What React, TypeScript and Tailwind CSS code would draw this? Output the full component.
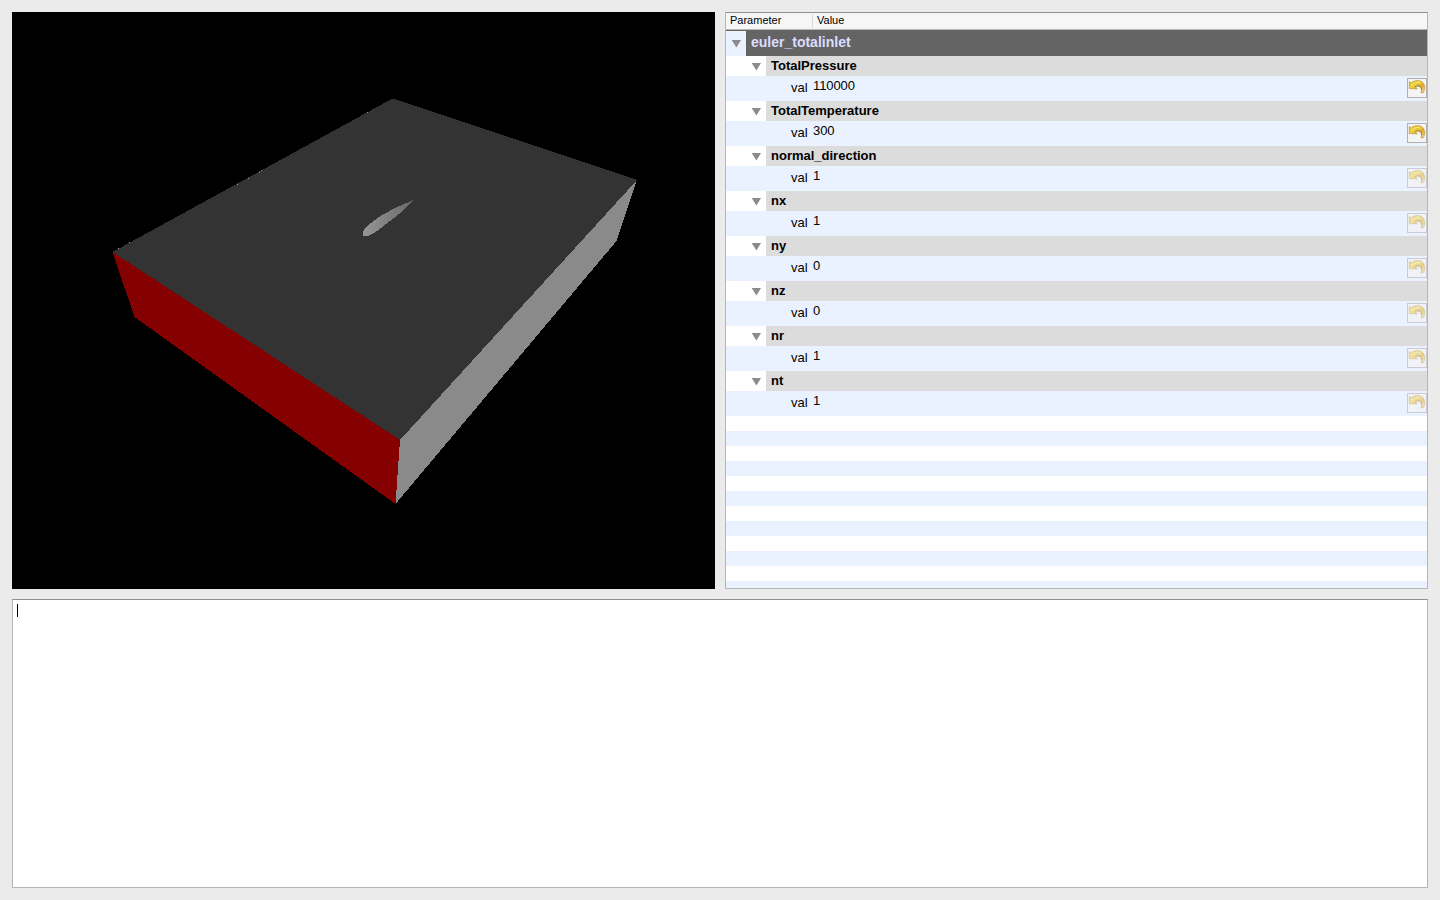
const groups = [
  { name: 'TotalPressure', value: '110000', changed: true },
  { name: 'TotalTemperature', value: '300', changed: true },
  { name: 'normal_direction', value: '1', changed: false },
  { name: 'nx', value: '1', changed: false },
  { name: 'ny', value: '0', changed: false },
  { name: 'nz', value: '0', changed: false },
  { name: 'nr', value: '1', changed: false },
  { name: 'nt', value: '1', changed: false },
];

function Arrow() {
  return (
    <svg width="10" height="8" viewBox="0 0 10 8" className="shrink-0">
      <path d="M0.7 0H10L5.4 7.5Z" fill="#8b8b8b" />
    </svg>
  );
}

function ResetButton({ enabled }: { enabled: boolean }) {
  return (
    <button
      className={
        enabled
          ? 'h-5 w-5 shrink-0 border border-[#b0b0b0] bg-[#f4f4f4]'
          : 'h-5 w-5 shrink-0 border border-[#cbccd2] bg-[#f0f2f8]'
      }
    >
      <svg width="18" height="18" viewBox="0 0 18 18" className={enabled ? 'block' : 'block opacity-50'}>
        <defs>
          <linearGradient id="undo" x1="0" y1="0" x2="1" y2="1">
            <stop offset="0" stopColor="#dcb318" />
            <stop offset="0.3" stopColor="#efd347" />
            <stop offset="0.6" stopColor="#d9aa28" />
            <stop offset="1" stopColor="#edd5b0" />
          </linearGradient>
        </defs>
        <path
          d="M1.3 2.6L3.4 4C6.3 1 11.6 0.8 14.6 3.4C17.3 6 17.3 10.8 15 14L13 13.7C14 11.2 13.6 8.5 11.8 7.4C10.4 6.6 8.7 6.7 7.2 7.7L9.4 9.8L1.3 9.6Z"
          fill="url(#undo)"
          stroke="#b98a1a"
          strokeWidth="0.6"
        />
        <path d="M2.4 5L4 5.6C7 3.1 10.5 2.8 13.2 4.5" fill="none" stroke="#f7e77b" strokeWidth="1" />
        <path d="M7.2 7.8C9.6 6 13.3 6.8 13.6 11" fill="none" stroke="#9c6a10" strokeWidth="0.7" />
      </svg>
    </button>
  );
}

function Scene() {
  return (
    <svg width="703" height="577" viewBox="12 12 703 577" className="block bg-black" shapeRendering="crispEdges">
      <defs>
        <linearGradient id="foil" x1="0" y1="0" x2="1" y2="0">
          <stop offset="0" stopColor="#969696" />
          <stop offset="1" stopColor="#686868" />
        </linearGradient>
      </defs>
      <path d="M392.5 98.5L637 180L400 440L112.5 252Z" fill="#333333" />
      <path d="M112.5 252L400 440L395.5 504L134.5 317Z" fill="#850000" />
      <path d="M637 180L616.5 241L395.5 504L400 440Z" fill="#8a8a8a" />
      <path
        d="M413.5 200L397 207L383 214.5C376 219 369 224 365.5 228C362 232 362.5 234 363 236H367.5C371 235 374 233.5 377 231L390 221L403 211Z"
        fill="url(#foil)"
      />
      <path d="M118 248h1M129 242h1M237 184h1M248 178h1M259 172h1M261 170h1M367 112h1" stroke="#999999" />
    </svg>
  );
}

export default function App() {
  return (
    <div className="flex h-[900px] w-[1440px] flex-col gap-2.5 bg-[#ebebeb] p-3 font-['Liberation_Sans',sans-serif] text-[13px] text-black">
      <div className="flex h-[577px] shrink-0 gap-2.5">
        <Scene />
        <div className="flex w-[703px] flex-col overflow-hidden border border-[#b5b5b5] border-t-[#8e8e8e] bg-white">
          <div className="flex h-[17px] shrink-0 items-center border-b border-[#b8b8b8] bg-[#f6f6f6] text-[11px] leading-[12px]">
            <div className="h-[14px] w-[87px] border-r border-[#dadada] pl-1">Parameter</div>
            <div className="h-[14px] pl-1">Value</div>
          </div>
          <div className="flex h-[26px] shrink-0 border-t border-[#646464] bg-[#646464]">
            <div className="flex w-5 shrink-0 items-center justify-center bg-[#ebf2ff]">
              <Arrow />
            </div>
            <div className="pl-[5px] text-[14px] leading-[23px] font-bold text-[#dcdcff]">
              euler_totalinlet
            </div>
          </div>
          {groups.map((g) => (
            <div key={g.name} className="shrink-0">
              <div className="flex h-5">
                <div className="flex w-10 shrink-0 items-center justify-end bg-white pt-px pr-[5px]">
                  <Arrow />
                </div>
                <div className="grow bg-[#dcdcdc] pl-[5px] leading-[19px] font-bold">{g.name}</div>
              </div>
              <div className="flex h-[25px] items-start bg-[#ebf2ff]">
                <div className="w-[87px] shrink-0 pl-[65px] leading-[24px]">val</div>
                <div className="grow leading-[20px] tracking-[-0.1px]">{g.value}</div>
                <div className="pt-0.5">
                  <ResetButton enabled={g.changed} />
                </div>
              </div>
            </div>
          ))}
          <div className="grow bg-[repeating-linear-gradient(to_bottom,#ffffff_0px,#ffffff_15px,#ebf2ff_15px,#ebf2ff_30px)]" />
        </div>
      </div>
      <div className="h-[289px] shrink-0 border border-[#b5b5b5] border-t-[#8e8e8e] bg-white pt-1 pl-1">
        <div className="h-[13px] w-px bg-black" />
      </div>
    </div>
  );
}
